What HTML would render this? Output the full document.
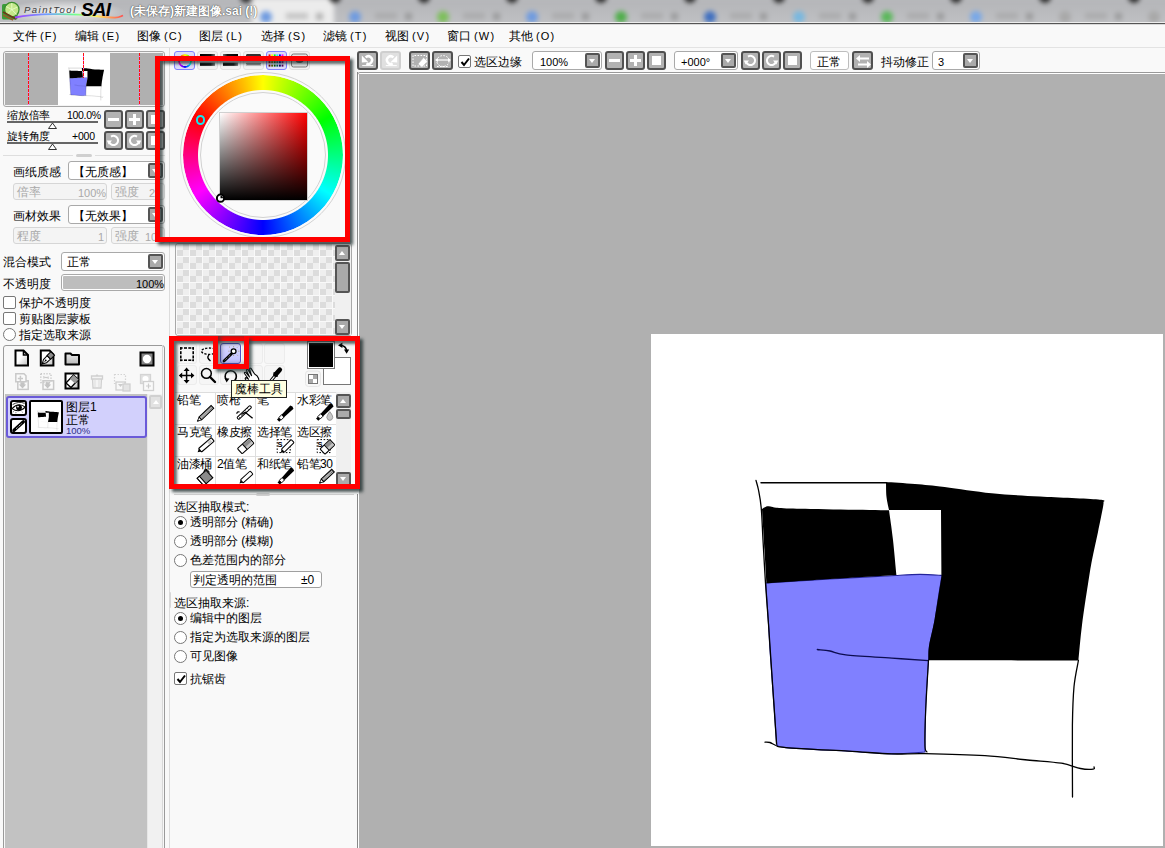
<!DOCTYPE html><html><head><meta charset="utf-8"><style>
*{box-sizing:border-box;margin:0;padding:0}
html,body{width:1165px;height:848px;overflow:hidden;background:#f9f9f9;font-family:"Liberation Sans",sans-serif;font-size:12px;color:#000}
body{position:relative}
.a{position:absolute}
.t{position:absolute;white-space:nowrap;line-height:14px;font-size:12px;font-weight:500}
.dbtn{position:absolute;border:2px solid #505050;border-radius:3px;background:#b2b2b2}
.combo{position:absolute;background:#fff;border:1px solid #a9a9a9;border-radius:3px}
.dd{position:absolute;width:15px;height:15px;border:2px solid #555;border-radius:2px;background:#aaa}
.dd:after{content:"";position:absolute;left:2px;top:4px;border-left:3.5px solid transparent;border-right:3.5px solid transparent;border-top:4px solid #fff}
.rb{position:absolute;width:13px;height:13px;border:1px solid #777;border-radius:50%;background:#fff}
.cb{position:absolute;width:13px;height:13px;border:1px solid #777;border-radius:2px;background:#fff}
.redbox{position:absolute;border:5px solid #f00;box-shadow:3px 3px 3px rgba(30,45,45,.8), inset 3px 3px 3px rgba(30,45,45,.7)}
.dis{position:absolute;border:1px solid #d6d6d6;border-radius:3px;background:#f4f4f4;color:#a9a9a9}
.tb{position:absolute;border:1px solid #e2e2e2;border-radius:3px;background:#f4f4f4}
svg{position:absolute;overflow:visible}
</style></head><body>
<div class="a" style="left:0;top:0;width:1165px;height:22px;background:#b9babd;overflow:hidden">
<div class="a" style="left:-10px;top:-10px;width:1185px;height:42px;filter:blur(2.5px)">
<div class="a" style="left:0;top:10px;width:1185px;height:32px;background:linear-gradient(#b4b5b8,#c4c5c8)"></div>
<div class="a" style="left:262px;top:8px;width:82px;height:30px;background:#ececec"></div>
<div class="a" style="left:250px;top:0px;width:12px;height:13px;border-radius:50%;background:#2a2a2a"></div>
<div class="a" style="left:338.7px;top:0px;width:12px;height:13px;border-radius:50%;background:#2a2a2a"></div>
<div class="a" style="left:427.5px;top:0px;width:12px;height:13px;border-radius:50%;background:#2a2a2a"></div>
<div class="a" style="left:516.3px;top:0px;width:12px;height:13px;border-radius:50%;background:#2a2a2a"></div>
<div class="a" style="left:605.1px;top:0px;width:12px;height:13px;border-radius:50%;background:#2a2a2a"></div>
<div class="a" style="left:693.9px;top:0px;width:12px;height:13px;border-radius:50%;background:#2a2a2a"></div>
<div class="a" style="left:782.7px;top:0px;width:12px;height:13px;border-radius:50%;background:#2a2a2a"></div>
<div class="a" style="left:871.5px;top:0px;width:12px;height:13px;border-radius:50%;background:#2a2a2a"></div>
<div class="a" style="left:960.3px;top:0px;width:12px;height:13px;border-radius:50%;background:#2a2a2a"></div>
<div class="a" style="left:1049.1px;top:0px;width:12px;height:13px;border-radius:50%;background:#2a2a2a"></div>
<div class="a" style="left:1137.9px;top:0px;width:12px;height:13px;border-radius:50%;background:#2a2a2a"></div>
<div class="a" style="left:1226.7px;top:0px;width:12px;height:13px;border-radius:50%;background:#2a2a2a"></div>
<div class="a" style="left:269.7px;top:21px;width:12px;height:12px;border-radius:50%;background:#6f9be0"></div>
<div class="a" style="left:295.7px;top:23px;width:22px;height:6px;background:#9a9a9a;opacity:.5"></div>
<div class="a" style="left:325.7px;top:23px;width:7px;height:7px;background:#777;opacity:.5"></div>
<div class="a" style="left:358.5px;top:21px;width:12px;height:12px;border-radius:50%;background:#6f9be0"></div>
<div class="a" style="left:384.5px;top:23px;width:22px;height:6px;background:#9a9a9a;opacity:.5"></div>
<div class="a" style="left:414.5px;top:23px;width:7px;height:7px;background:#777;opacity:.5"></div>
<div class="a" style="left:447.3px;top:21px;width:12px;height:12px;border-radius:50%;background:#7cbf5a"></div>
<div class="a" style="left:473.3px;top:23px;width:22px;height:6px;background:#9a9a9a;opacity:.5"></div>
<div class="a" style="left:503.3px;top:23px;width:7px;height:7px;background:#777;opacity:.5"></div>
<div class="a" style="left:536.1px;top:21px;width:12px;height:12px;border-radius:50%;background:#6f9be0"></div>
<div class="a" style="left:562.1px;top:23px;width:22px;height:6px;background:#9a9a9a;opacity:.5"></div>
<div class="a" style="left:592.1px;top:23px;width:7px;height:7px;background:#777;opacity:.5"></div>
<div class="a" style="left:624.9px;top:21px;width:12px;height:12px;border-radius:50%;background:#4fae4a"></div>
<div class="a" style="left:650.9px;top:23px;width:22px;height:6px;background:#9a9a9a;opacity:.5"></div>
<div class="a" style="left:680.9px;top:23px;width:7px;height:7px;background:#777;opacity:.5"></div>
<div class="a" style="left:713.7px;top:21px;width:12px;height:12px;border-radius:50%;background:#3f6fc0"></div>
<div class="a" style="left:739.7px;top:23px;width:22px;height:6px;background:#9a9a9a;opacity:.5"></div>
<div class="a" style="left:769.7px;top:23px;width:7px;height:7px;background:#777;opacity:.5"></div>
<div class="a" style="left:802.5px;top:21px;width:12px;height:12px;border-radius:50%;background:#78b8e0"></div>
<div class="a" style="left:828.5px;top:23px;width:22px;height:6px;background:#9a9a9a;opacity:.5"></div>
<div class="a" style="left:858.5px;top:23px;width:7px;height:7px;background:#777;opacity:.5"></div>
<div class="a" style="left:891.3px;top:21px;width:12px;height:12px;border-radius:50%;background:#5ab85a"></div>
<div class="a" style="left:917.3px;top:23px;width:22px;height:6px;background:#9a9a9a;opacity:.5"></div>
<div class="a" style="left:947.3px;top:23px;width:7px;height:7px;background:#777;opacity:.5"></div>
<div class="a" style="left:980.1px;top:21px;width:12px;height:12px;border-radius:50%;background:#78a8e8"></div>
<div class="a" style="left:1006.1px;top:23px;width:22px;height:6px;background:#9a9a9a;opacity:.5"></div>
<div class="a" style="left:1036.1px;top:23px;width:7px;height:7px;background:#777;opacity:.5"></div>
<div class="a" style="left:1068.9px;top:21px;width:12px;height:12px;border-radius:50%;background:#a8a8a8"></div>
<div class="a" style="left:1094.9px;top:23px;width:22px;height:6px;background:#9a9a9a;opacity:.5"></div>
<div class="a" style="left:1124.9px;top:23px;width:7px;height:7px;background:#777;opacity:.5"></div>
<div class="a" style="left:1157.7px;top:21px;width:12px;height:12px;border-radius:50%;background:#a8a8a8"></div>
<div class="a" style="left:1183.7px;top:23px;width:22px;height:6px;background:#9a9a9a;opacity:.5"></div>
<div class="a" style="left:1213.7px;top:23px;width:7px;height:7px;background:#777;opacity:.5"></div>
</div>
<div class="a" style="left:1px;top:0px;width:125px;height:22px;background:radial-gradient(ellipse at 50% 55%,rgba(255,255,255,.9),rgba(255,255,255,0) 70%)"></div>
<svg style="left:0;top:0" width="130" height="22" viewBox="0 0 130 22"><defs><linearGradient id="rbw"><stop offset="0" stop-color="#a040ff"/><stop offset=".3" stop-color="#70a0ff"/><stop offset=".55" stop-color="#70ff90"/><stop offset=".75" stop-color="#fff060"/><stop offset="1" stop-color="#ff5050"/></linearGradient></defs><rect x="2" y="4" width="15.5" height="15.5" rx="1.5" fill="#3a9c3a"/><circle cx="11.8" cy="9.6" r="7.2" fill="#c4e88a" stroke="#3d8f2f" stroke-width="1.3"/><path d="M11.8 9.6 L11.8 3 M11.8 9.6 L17.5 7 M11.8 9.6 L16.5 14.5 M11.8 9.6 L7 14.5 M11.8 9.6 L6 6.5" stroke="#eaffd0" stroke-width="0.8"/><path d="M3 12 L16 19" stroke="#6a3a18" stroke-width="1.8"/><path d="M3 15 L13 20" stroke="#9a5a28" stroke-width="1.4"/><path d="M15 17.5 C35 13.5, 70 13, 95 16 S 118 17.5, 123 15.5" stroke="url(#rbw)" stroke-width="1.8" fill="none"/></svg>
<div class="t" style="left:24px;top:5px;font-size:9.5px;line-height:9px;font-style:italic;font-weight:400;color:#3a3a3a;letter-spacing:1.5px">PaintTool</div>
<div class="t" style="left:81px;top:2px;font-size:19px;line-height:16px;font-weight:bold;font-style:italic;color:#000;letter-spacing:-0.8px">SAI</div>
<div class="t" style="left:130px;top:5px;font-size:12px;line-height:13px;color:#fff;font-weight:bold;text-shadow:0 0 1px rgba(0,0,0,.7),0 0 2px rgba(0,0,0,.35)">(未保存)新建图像.sai (!)</div>
</div>
<div class="a" style="left:0px;top:22px;width:1165px;height:1px;background:#ededed"></div>
<div class="a" style="left:0px;top:23px;width:1165px;height:1px;background:#555"></div>
<div class="a" style="left:0px;top:24px;width:1165px;height:1px;background:#d9d9d9"></div>
<div class="t" style="left:13px;top:29px;">文件<span style="font-size:11px;margin-left:3px;letter-spacing:1.2px">(F)</span></div>
<div class="t" style="left:75px;top:29px;">编辑<span style="font-size:11px;margin-left:3px;letter-spacing:1.2px">(E)</span></div>
<div class="t" style="left:137px;top:29px;">图像<span style="font-size:11px;margin-left:3px;letter-spacing:1.2px">(C)</span></div>
<div class="t" style="left:199px;top:29px;">图层<span style="font-size:11px;margin-left:3px;letter-spacing:1.2px">(L)</span></div>
<div class="t" style="left:261px;top:29px;">选择<span style="font-size:11px;margin-left:3px;letter-spacing:1.2px">(S)</span></div>
<div class="t" style="left:323px;top:29px;">滤镜<span style="font-size:11px;margin-left:3px;letter-spacing:1.2px">(T)</span></div>
<div class="t" style="left:385px;top:29px;">视图<span style="font-size:11px;margin-left:3px;letter-spacing:1.2px">(V)</span></div>
<div class="t" style="left:447px;top:29px;">窗口<span style="font-size:11px;margin-left:3px;letter-spacing:1.2px">(W)</span></div>
<div class="t" style="left:509px;top:29px;">其他<span style="font-size:11px;margin-left:3px;letter-spacing:1.2px">(O)</span></div>
<div class="a" style="left:0px;top:47px;width:1165px;height:1px;background:#e3e3e3"></div>
<div class="a" style="left:357px;top:72px;width:820px;height:800px;border:1px solid #999;border-radius:3px;background:#fff"></div>
<div class="a" style="left:359px;top:74px;width:806px;height:774px;background:#b0b0b0"></div>
<div class="a" style="left:651px;top:334px;width:512px;height:512px;background:#fff"></div>
<div class="a" style="left:3px;top:51px;width:162px;height:56px;border:1px solid #a6a6a6;border-radius:3px;background:#f4f4f4"></div>
<div class="a" style="left:5px;top:53px;width:158px;height:52px;background:#b0b0b0"></div>
<div class="a" style="left:58px;top:53px;width:52px;height:52px;background:#fff"></div>
<svg style="left:58px;top:53px" width="52" height="53"><g transform="scale(0.1016) translate(-651 -334)"><path d="M765.8 583 C776.5 582.3 808.3 580.2 830 579 C851.7 577.8 885.0 576.1 896 575.5 C900.0 575.3 912.3 574.4 920 574.4 C927.7 574.4 938.3 575.2 942 575.4 C941.3 579.5 939.2 592.2 938 600 C936.8 607.8 936.1 614.3 934.7 622 C933.3 629.7 930.5 639.7 929.5 646 C928.5 652.3 928.7 657.7 928.5 660 C928.1 666.7 926.5 688.3 926 700 C925.5 711.7 925.4 721.3 925.2 730 C925.0 738.7 925.0 748.3 925 752 C919.5 752.3 904.8 754.0 892 753.9 C879.2 753.8 866.2 752.2 848.5 751.2 C830.8 750.2 798.0 748.8 786 747.6 C774.0 746.4 778.2 744.6 776.6 744 C776.2 737.6 775.1 721.3 774 705.6 C772.9 689.9 770.9 663.6 770 650 C769.1 636.4 769.2 635.2 768.5 624 C767.8 612.8 766.2 589.8 765.8 583 Z" fill="#8080ff" stroke="#24249a" stroke-width="1.1"/><path d="M762 509 C762.7 508.6 764.7 507.2 766 506.8 C767.3 506.4 766.0 506.2 770 506.5 C774.0 506.8 770.2 507.9 790 508.5 C809.8 509.1 872.5 510.0 889 510.3 C889.7 515.2 891.8 529.2 893 540 C894.2 550.8 895.8 569.2 896.4 575 C885.3 575.7 851.7 577.6 830 579 C808.3 580.4 777.0 582.6 766.4 583.3 C766.1 577.8 765.2 562.4 764.5 550 C763.8 537.6 762.4 515.8 762 509 Z" fill="#000"/><path d="M886 482 C890.8 482.3 905.2 483.2 915 484 C924.8 484.8 931.8 485.4 944.6 487 C957.4 488.6 975.8 491.7 991.7 493.3 C1007.6 494.9 1022.2 495.5 1040 496.5 C1057.8 497.5 1087.6 498.6 1098.2 499.5 C1108.8 500.4 1102.6 501.6 1103.5 502 C1103.4 502.8 1103.9 502.0 1103 507 C1102.1 512.0 1099.8 523.2 1098 532 C1096.2 540.8 1093.7 551.3 1092 560 C1090.3 568.7 1089.7 573.2 1088 584 C1086.3 594.8 1083.6 612.2 1082 625 C1080.4 637.8 1079.0 654.6 1078.4 660.5 C1053.4 660.5 953.5 660.3 928.5 660.3 C928.6 657.9 928.0 652.9 929 646 C930.0 639.1 932.6 630.3 934.7 618.7 C936.8 607.1 940.4 583.5 941.5 576.5 C941.4 565.4 941.1 521.1 941 510 C932.3 510.0 897.7 510.0 889 510 C888.6 507.8 887.0 501.7 886.5 497 C886.0 492.3 886.1 484.5 886 482 Z" fill="#000"/><path d="M756 480.4 C756.4 482.0 757.6 485.4 758.5 490 C759.4 494.6 760.5 499.5 761.2 507.8 C762.0 516.1 762.3 527.5 763 540 C763.7 552.5 764.6 569.0 765.5 583 C766.4 597.0 767.1 603.6 768.5 624 C769.9 644.4 772.6 685.6 774 705.6 C775.4 725.6 776.2 737.6 776.6 744 " fill="none" stroke="#000" stroke-width="1.3" stroke-linecap="round"/><path d="M761 482.7 C781.9 482.7 865.5 482.7 886.4 482.7 " fill="none" stroke="#000" stroke-width="1.5" stroke-linecap="round"/><path d="M817.3 649.5 C819.4 649.8 825.2 650.1 830 651 C834.8 651.9 835.5 653.7 845.8 654.9 C856.1 656.1 878.1 657.1 891.9 658.1 C905.7 659.1 922.4 660.2 928.5 660.6 " fill="none" stroke="#0c0c50" stroke-width="1.3" stroke-linecap="round"/><path d="M765 742.2 C765.8 742.2 768.2 742.0 770 742.5 C771.8 743.0 773.3 744.6 776 745.5 C778.7 746.4 773.9 746.6 786 747.6 C798.1 748.6 830.9 750.2 848.5 751.2 C866.1 752.2 879.1 753.5 891.9 753.9 C904.6 754.3 909.5 753.3 925 753.6 C940.5 753.9 967.9 754.6 985 755.7 C1002.1 756.8 1014.7 758.8 1027.4 760 C1040.1 761.2 1052.6 761.8 1061.4 763.2 C1070.2 764.6 1075.2 767.5 1080.5 768.5 C1085.8 769.5 1091.0 769.4 1093.2 769.1 C1095.5 768.9 1093.9 767.4 1094 767 " fill="none" stroke="#000" stroke-width="1.3" stroke-linecap="round"/><path d="M1078.4 660.5 C1077.7 664.9 1075.0 676.0 1074 686.7 C1073.0 697.5 1072.7 706.6 1072.4 725 C1072.2 743.4 1072.5 785.0 1072.5 797 " fill="none" stroke="#000" stroke-width="1.3" stroke-linecap="round"/><path d="M928.5 660 C928.0 669.0 926.1 700.0 925.5 714.3 C924.9 728.6 924.8 739.7 925 746 C925.2 752.3 926.7 751.0 927 752 " fill="none" stroke="#000" stroke-width="1.2" stroke-linecap="round"/></g></svg>
<div class="a" style="left:28px;top:53px;width:1px;height:52px;background:repeating-linear-gradient(180deg,#ff1010 0 3px,#ff70ff 3px 4px)"></div>
<div class="a" style="left:83px;top:53px;width:1px;height:25px;background:repeating-linear-gradient(180deg,#ff1010 0 3px,#ff70ff 3px 4px)"></div>
<div class="a" style="left:139px;top:53px;width:1px;height:52px;background:repeating-linear-gradient(180deg,#ff1010 0 3px,#ff70ff 3px 4px)"></div>
<div class="t" style="left:7px;top:109px;font-size:10.5px;line-height:12px;color:#000;letter-spacing:-0.2px">缩放倍率</div>
<div class="t" style="left:67px;top:110px;font-size:10.5px;line-height:11px;letter-spacing:-0.3px">100.0%</div>
<div class="a" style="left:7px;top:121px;width:91px;height:2px;background:#666"></div>
<svg style="left:47px;top:122px" width="12" height="8"><path d="M1.5 6.5 L5.5 1 L9.5 6.5 Z" fill="#fff" stroke="#333" stroke-width="1"/></svg>
<div class="t" style="left:7px;top:130px;font-size:10.5px;line-height:12px;letter-spacing:-0.2px">旋转角度</div>
<div class="t" style="left:72px;top:131px;font-size:10.5px;line-height:11px;letter-spacing:-0.2px">+000</div>
<div class="a" style="left:7px;top:142px;width:91px;height:2px;background:#666"></div>
<svg style="left:47px;top:143px" width="12" height="8"><path d="M1.5 6.5 L5.5 1 L9.5 6.5 Z" fill="#fff" stroke="#333" stroke-width="1"/></svg>
<div class="dbtn" style="left:104px;top:110px;width:19px;height:19px"><div class="a" style="left:2px;top:6px;width:11px;height:3px;background:#fff"></div></div>
<div class="dbtn" style="left:125px;top:110px;width:19px;height:19px"><div class="a" style="left:2px;top:6px;width:11px;height:3px;background:#fff"></div><div class="a" style="left:6px;top:2px;width:3px;height:11px;background:#fff"></div></div>
<div class="dbtn" style="left:146px;top:110px;width:19px;height:19px"><div class="a" style="left:3px;top:3px;width:9px;height:9px;background:#fff"></div></div>
<div class="dbtn" style="left:104px;top:131px;width:19px;height:19px"><svg style="left:0px;top:0px" width="15" height="15"><path d="M5 3.6 A4.6 4.6 0 1 1 3.2 9.2" stroke="#fff" stroke-width="2" fill="none"/><path d="M0.8 7.6 L6 7.6 L2.6 11.6 Z" fill="#fff"/></svg></div>
<div class="dbtn" style="left:125px;top:131px;width:19px;height:19px"><svg style="left:0px;top:0px" width="15" height="15"><path d="M10 3.6 A4.6 4.6 0 1 0 11.8 9.2" stroke="#fff" stroke-width="2" fill="none"/><path d="M14.2 7.6 L9 7.6 L12.4 11.6 Z" fill="#fff"/></svg></div>
<div class="dbtn" style="left:146px;top:131px;width:19px;height:19px"><div class="a" style="left:3px;top:3px;width:9px;height:9px;background:#fff"></div></div>
<div class="a" style="left:3px;top:155px;width:70px;height:1px;background:#dedede"></div>
<div class="a" style="left:76px;top:154px;width:16px;height:3px;background:#d0d0d0;border-radius:2px"></div>
<div class="a" style="left:95px;top:155px;width:70px;height:1px;background:#dedede"></div>
<div class="t" style="left:13px;top:165px;">画纸质感</div>
<div class="combo" style="left:68px;top:161px;width:97px;height:19px;"></div>
<div class="t" style="left:73px;top:165px;">【无质感】</div>
<div class="dd" style="left:148px;top:163px"></div>
<div class="dis" style="left:13px;top:183px;width:94px;height:17px"><div class="t" style="left:3px;top:1px">倍率</div><div class="t" style="left:64px;top:2px;font-size:11px">100%</div></div>
<div class="dis" style="left:111px;top:183px;width:54px;height:17px"><div class="t" style="left:3px;top:1px">强度</div><div class="t" style="left:37px;top:2px;font-size:11px">2</div></div>
<div class="t" style="left:13px;top:209px;">画材效果</div>
<div class="combo" style="left:68px;top:205px;width:97px;height:19px;"></div>
<div class="t" style="left:73px;top:209px;">【无效果】</div>
<div class="dd" style="left:148px;top:207px"></div>
<div class="dis" style="left:13px;top:227px;width:94px;height:17px"><div class="t" style="left:3px;top:1px">程度</div><div class="t" style="left:84px;top:2px;font-size:11px">1</div></div>
<div class="dis" style="left:111px;top:227px;width:54px;height:17px"><div class="t" style="left:3px;top:1px">强度</div><div class="t" style="left:33px;top:2px;font-size:11px">10</div></div>
<div class="t" style="left:3px;top:255px;">混合模式</div>
<div class="combo" style="left:61px;top:252px;width:104px;height:19px;"></div>
<div class="t" style="left:67px;top:255px;">正常</div>
<div class="dd" style="left:148px;top:254px"></div>
<div class="t" style="left:3px;top:277px;">不透明度</div>
<div class="a" style="left:61px;top:274px;width:104px;height:17px;border:1px solid #a9a9a9;border-radius:3px;background:#fff;padding:1px"><div style="width:100%;height:100%;background:#bdbdbd;border-radius:1px"></div></div>
<div class="t" style="left:136px;top:277px;font-size:11px">100%</div>
<div class="cb" style="left:3px;top:296px;width:13px;height:13px;"></div>
<div class="t" style="left:19px;top:296px;">保护不透明度</div>
<div class="cb" style="left:3px;top:312px;width:13px;height:13px;"></div>
<div class="t" style="left:19px;top:312px;">剪贴图层蒙板</div>
<div class="rb" style="left:3px;top:328px;width:13px;height:13px;"></div>
<div class="t" style="left:19px;top:328px;">指定选取来源</div>
<div class="a" style="left:3px;top:345px;width:162px;height:520px;border:1px solid #9a9a9a;border-radius:3px;background:#f8f8f8"></div>
<svg style="left:14px;top:349px" width="17" height="19" viewBox="0 0 17 19"><defs><linearGradient id="pg" x1="0" y1="0" x2="1" y2="1"><stop offset=".45" stop-color="#fff"/><stop offset="1" stop-color="#bbb"/></linearGradient></defs><path d="M1.5 1.5 H9.5 L14 6 V16.5 H1.5 Z" fill="url(#pg)" stroke="#000" stroke-width="2" stroke-linejoin="miter"/><path d="M9.5 1.5 V6 H14" fill="none" stroke="#000" stroke-width="1.6"/></svg>
<svg style="left:0;top:0" width="1165" height="848" viewBox="0 0 1165 848"><path d="M40.8 350.6 H49.6 L53.4 354.4 V365.4 H40.8 Z" fill="url(#pg)" stroke="#000" stroke-width="2"/><g transform="translate(42.2 364) rotate(-45)"><path d="M0 0 L4 -2.2 L9.4 -2.4 L9.4 2.4 L4 2.2 Z" fill="#fff" stroke="#000" stroke-width="1"/><circle cx="5" cy="0" r="0.9" fill="#000"/><path d="M0.6 0 H4.2" stroke="#000" stroke-width="0.6"/><rect x="9.4" y="-2.6" width="5.4" height="5.2" fill="#8a8a8a" stroke="#000" stroke-width="1"/></g></svg>
<svg style="left:64px;top:351px" width="17" height="16" viewBox="0 0 17 16"><defs><linearGradient id="fg" x1="0" y1="0" x2="0" y2="1"><stop offset="0" stop-color="#e8e8e8"/><stop offset="1" stop-color="#b8b8b8"/></linearGradient></defs><path d="M1.5 2.5 H6.5 L8 4 H15 V13.5 H1.5 Z" fill="url(#fg)" stroke="#000" stroke-width="2" stroke-linejoin="round"/></svg>
<svg style="left:139px;top:351px" width="17" height="17" viewBox="0 0 17 17"><rect x="1.5" y="1.5" width="13" height="13" fill="#858585" stroke="#000" stroke-width="2"/><circle cx="8" cy="8" r="4.2" fill="#fff"/></svg>
<svg style="left:0;top:0" width="1165" height="848" viewBox="0 0 1165 848"><g fill="none" stroke="#c9c9c9" stroke-width="1.5"><rect x="17.8" y="380.8" width="10.4" height="8.6" fill="#fafafa"/><path d="M15.8 373.8 H24 L26 375.8 V381.8 H15.8 Z" fill="#fafafa"/><path d="M20.4 375.8 V381 M17.8 378.4 H23"/><rect x="43" y="380.8" width="10.6" height="8.6" fill="#fafafa"/><path d="M40.8 373.8 H51 V382" stroke-dasharray="1.2 1.6"/><path d="M40.8 373.8 V382.4 H51" stroke-dasharray="1.2 1.6"/><path d="M43 378 L49 377 M43 376.6 L49 378.4" stroke-width="0.9"/></g><path d="M20.4 382.2 H24.6 V384.6 H26.2 L22.5 388.4 L18.8 384.6 H20.4 Z" fill="#c4c4c4"/><path d="M45.6 382.2 H49.6 V384.6 H51.2 L47.6 388.4 L44 384.6 H45.6 Z" fill="#c4c4c4"/></svg>
<svg style="left:64px;top:372px" width="17" height="19" viewBox="0 0 17 19"><rect x="1.5" y="1.5" width="13" height="15" fill="url(#pg)" stroke="#000" stroke-width="2"/><path d="M2 11 L9.5 3 L14.5 7.5 L7 15.5 Z" fill="#fff" stroke="#000" stroke-width="1.3"/><path d="M6 7 L9.5 3 L14.5 7.5 L11 11.5 Z" fill="#999"/></svg>
<svg style="left:89px;top:372px" width="17" height="18" viewBox="0 0 17 18"><path d="M2.5 4 H13.5 V7 H2.5 Z M3.5 7 H12.5 L12 16 H4 Z" fill="#f4f4f4" stroke="#d0d0d0" stroke-width="1.3"/><path d="M6 8 V15 M10 8 V15" stroke="#ddd" stroke-width="1"/><path d="M7 4 Q8 1 9 4" fill="none" stroke="#d0d0d0"/></svg>
<svg style="left:113px;top:373px" width="19" height="19" viewBox="0 0 19 19"><rect x="1.5" y="1.5" width="11" height="9" fill="none" stroke="#d4d4d4" stroke-width="1.2" stroke-dasharray="1.5 1.5"/><rect x="3" y="9" width="9" height="8" fill="#f8f8f8" stroke="#d0d0d0" stroke-width="1.3"/><rect x="10" y="11" width="7" height="7" fill="#e4e4e4" stroke="#d0d0d0" stroke-width="1.3"/><path d="M5 11 H10 L7.5 14 Z" fill="#ccc"/></svg>
<svg style="left:139px;top:373px" width="17" height="19" viewBox="0 0 17 19"><rect x="1.5" y="1.5" width="10" height="9" fill="#e2e2e2" stroke="#d4d4d4" stroke-width="1.3"/><circle cx="6.5" cy="6" r="3" fill="#fff"/><rect x="4.5" y="8.5" width="10" height="9" fill="#fafafa" stroke="#d0d0d0" stroke-width="1.3"/><path d="M9.5 10.5 V15.5 M7 13 H12" stroke="#ccc" stroke-width="1.2"/></svg>
<div class="a" style="left:5px;top:394px;width:142px;height:460px;background:#c2c2c2"></div>
<div class="a" style="left:147px;top:394px;width:16px;height:460px;background:#f1f1f1;border-left:1px solid #e6e6e6"></div>
<div class="a" style="left:162px;top:345px;width:1px;height:503px;background:#d8d8d8"></div>
<div class="a" style="left:169px;top:48px;width:1px;height:800px;background:#dcdcdc"></div>
<div class="a" style="left:149px;top:395px;width:13px;height:14px;border:2px solid #d0d0d0;border-radius:2px;background:#e2e2e2"><div class="a" style="left:1.5px;top:3px;border-left:3.5px solid transparent;border-right:3.5px solid transparent;border-bottom:4px solid #fff"></div></div>
<div class="a" style="left:6px;top:396px;width:141px;height:42px;border:2px solid #6a5ad8;border-radius:3px;background:#d2d0fc"></div>
<div class="a" style="left:10px;top:400px;width:17px;height:16px;border:2px solid #000;border-radius:3px;background:#fff"></div>
<svg style="left:0;top:0" width="1165" height="848" viewBox="0 0 1165 848"><path d="M12 408.6 Q18.5 401.6 25.2 407.2 Q19 413.6 12 408.6 Z" fill="#fff" stroke="#000" stroke-width="1.1"/><circle cx="19" cy="407.6" r="2.9" fill="#000"/><circle cx="18" cy="406.6" r="0.9" fill="#fff"/><path d="M12.6 404.6 Q19 400.8 24.6 403.4" fill="none" stroke="#222" stroke-width="0.9"/><path d="M13.6 411 L13 412.4 M16 412 L15.8 413.2 M22 411.6 L22.6 412.6" stroke="#555" stroke-width="0.7"/></svg>
<div class="a" style="left:10px;top:418px;width:17px;height:16px;border:2px solid #000;border-radius:3px;background:#fff"></div>
<svg style="left:0;top:0" width="1165" height="848" viewBox="0 0 1165 848"><path d="M14 430.2 L23.4 421.8" stroke="#000" stroke-width="3.2" stroke-linecap="round"/><path d="M12.6 431.6 L14.4 430" stroke="#000" stroke-width="1.6"/><path d="M16 428.8 L21.6 423.6" stroke="#fff" stroke-width="0.9" stroke-dasharray="1.1 1"/></svg>
<div class="a" style="left:29px;top:400px;width:34px;height:34px;border:2px solid #000;border-radius:2px;background:#fff;overflow:hidden"></div>
<svg style="left:31px;top:402px" width="30" height="30"><g transform="scale(0.0615) translate(-651 -334)"><path d="M765.8 583 C776.5 582.3 808.3 580.2 830 579 C851.7 577.8 885.0 576.1 896 575.5 C900.0 575.3 912.3 574.4 920 574.4 C927.7 574.4 938.3 575.2 942 575.4 C941.3 579.5 939.2 592.2 938 600 C936.8 607.8 936.1 614.3 934.7 622 C933.3 629.7 930.5 639.7 929.5 646 C928.5 652.3 928.7 657.7 928.5 660 C928.1 666.7 926.5 688.3 926 700 C925.5 711.7 925.4 721.3 925.2 730 C925.0 738.7 925.0 748.3 925 752 C919.5 752.3 904.8 754.0 892 753.9 C879.2 753.8 866.2 752.2 848.5 751.2 C830.8 750.2 798.0 748.8 786 747.6 C774.0 746.4 778.2 744.6 776.6 744 C776.2 737.6 775.1 721.3 774 705.6 C772.9 689.9 770.9 663.6 770 650 C769.1 636.4 769.2 635.2 768.5 624 C767.8 612.8 766.2 589.8 765.8 583 Z" fill="#fff" stroke="#bbb" stroke-width="1.1"/><path d="M762 509 C762.7 508.6 764.7 507.2 766 506.8 C767.3 506.4 766.0 506.2 770 506.5 C774.0 506.8 770.2 507.9 790 508.5 C809.8 509.1 872.5 510.0 889 510.3 C889.7 515.2 891.8 529.2 893 540 C894.2 550.8 895.8 569.2 896.4 575 C885.3 575.7 851.7 577.6 830 579 C808.3 580.4 777.0 582.6 766.4 583.3 C766.1 577.8 765.2 562.4 764.5 550 C763.8 537.6 762.4 515.8 762 509 Z" fill="#000"/><path d="M886 482 C890.8 482.3 905.2 483.2 915 484 C924.8 484.8 931.8 485.4 944.6 487 C957.4 488.6 975.8 491.7 991.7 493.3 C1007.6 494.9 1022.2 495.5 1040 496.5 C1057.8 497.5 1087.6 498.6 1098.2 499.5 C1108.8 500.4 1102.6 501.6 1103.5 502 C1103.4 502.8 1103.9 502.0 1103 507 C1102.1 512.0 1099.8 523.2 1098 532 C1096.2 540.8 1093.7 551.3 1092 560 C1090.3 568.7 1089.7 573.2 1088 584 C1086.3 594.8 1083.6 612.2 1082 625 C1080.4 637.8 1079.0 654.6 1078.4 660.5 C1053.4 660.5 953.5 660.3 928.5 660.3 C928.6 657.9 928.0 652.9 929 646 C930.0 639.1 932.6 630.3 934.7 618.7 C936.8 607.1 940.4 583.5 941.5 576.5 C941.4 565.4 941.1 521.1 941 510 C932.3 510.0 897.7 510.0 889 510 C888.6 507.8 887.0 501.7 886.5 497 C886.0 492.3 886.1 484.5 886 482 Z" fill="#000"/><path d="M756 480.4 C756.4 482.0 757.6 485.4 758.5 490 C759.4 494.6 760.5 499.5 761.2 507.8 C762.0 516.1 762.3 527.5 763 540 C763.7 552.5 764.6 569.0 765.5 583 C766.4 597.0 767.1 603.6 768.5 624 C769.9 644.4 772.6 685.6 774 705.6 C775.4 725.6 776.2 737.6 776.6 744 " fill="none" stroke="#000" stroke-width="1.3" stroke-linecap="round"/><path d="M761 482.7 C781.9 482.7 865.5 482.7 886.4 482.7 " fill="none" stroke="#000" stroke-width="1.5" stroke-linecap="round"/><path d="M817.3 649.5 C819.4 649.8 825.2 650.1 830 651 C834.8 651.9 835.5 653.7 845.8 654.9 C856.1 656.1 878.1 657.1 891.9 658.1 C905.7 659.1 922.4 660.2 928.5 660.6 " fill="none" stroke="#bbb" stroke-width="1.3" stroke-linecap="round"/><path d="M765 742.2 C765.8 742.2 768.2 742.0 770 742.5 C771.8 743.0 773.3 744.6 776 745.5 C778.7 746.4 773.9 746.6 786 747.6 C798.1 748.6 830.9 750.2 848.5 751.2 C866.1 752.2 879.1 753.5 891.9 753.9 C904.6 754.3 909.5 753.3 925 753.6 C940.5 753.9 967.9 754.6 985 755.7 C1002.1 756.8 1014.7 758.8 1027.4 760 C1040.1 761.2 1052.6 761.8 1061.4 763.2 C1070.2 764.6 1075.2 767.5 1080.5 768.5 C1085.8 769.5 1091.0 769.4 1093.2 769.1 C1095.5 768.9 1093.9 767.4 1094 767 " fill="none" stroke="#000" stroke-width="1.3" stroke-linecap="round"/><path d="M1078.4 660.5 C1077.7 664.9 1075.0 676.0 1074 686.7 C1073.0 697.5 1072.7 706.6 1072.4 725 C1072.2 743.4 1072.5 785.0 1072.5 797 " fill="none" stroke="#000" stroke-width="1.3" stroke-linecap="round"/><path d="M928.5 660 C928.0 669.0 926.1 700.0 925.5 714.3 C924.9 728.6 924.8 739.7 925 746 C925.2 752.3 926.7 751.0 927 752 " fill="none" stroke="#000" stroke-width="1.2" stroke-linecap="round"/></g></svg>
<div class="t" style="left:66px;top:400px;">图层1</div>
<div class="t" style="left:66px;top:413px;">正常</div>
<div class="t" style="left:66px;top:426px;font-size:9.5px;line-height:10px;color:#303088;font-weight:400">100%</div>
<div class="a" style="left:357px;top:48px;width:1px;height:24px;background:#f9f9f9"></div>
<div class="a" style="left:357px;top:72px;width:1px;height:776px;background:#888"></div>
<div class="a" style="left:174px;top:51px;width:21px;height:19px;border-radius:3px;border:1px solid #8080ff;background:#dcdcf8"><div class="a" style="left:2.5px;top:2.4px;width:14px;height:14px;border-radius:50%;background:conic-gradient(#ff0,#0f0 16.67%,#0ff 33.33%,#00f 50%,#f0f 66.67%,#f00 83.33%,#ff0);-webkit-mask:radial-gradient(circle,transparent 4.8px,#000 5.3px)"></div></div>
<div class="a" style="left:197px;top:51px;width:21px;height:19px;border-radius:3px;border:1px solid #e0e0e0;background:#f2f2f2"></div>
<div class="a" style="left:220px;top:51px;width:21px;height:19px;border-radius:3px;border:1px solid #e0e0e0;background:#f2f2f2"></div>
<div class="a" style="left:243px;top:51px;width:21px;height:19px;border-radius:3px;border:1px solid #e0e0e0;background:#f2f2f2"></div>
<div class="a" style="left:266px;top:51px;width:21px;height:19px;border-radius:3px;border:1px solid #8080ff;background:#dcdcf8"></div>
<div class="a" style="left:289px;top:51px;width:21px;height:19px;border-radius:3px;border:1px solid #e0e0e0;background:#f2f2f2"></div>
<svg style="left:0;top:0" width="1165" height="848" viewBox="0 0 1165 848"><defs><linearGradient id="cw" x1="0" y1="0" x2="1" y2="1"><stop offset="0" stop-color="#ff0"/><stop offset=".35" stop-color="#0f0"/><stop offset=".6" stop-color="#0ff"/><stop offset=".8" stop-color="#00f"/><stop offset="1" stop-color="#f0f"/></linearGradient></defs><defs><linearGradient id="bar" x1="0" x2="1"><stop offset="0" stop-color="#000"/><stop offset=".7" stop-color="#111"/><stop offset="1" stop-color="#777"/></linearGradient><linearGradient id="bar2" x1="0" x2="1"><stop offset="0" stop-color="#777"/><stop offset=".3" stop-color="#111"/><stop offset="1" stop-color="#000"/></linearGradient></defs><rect x="200" y="54" width="15" height="3.2" fill="url(#bar)"/><rect x="200" y="62.6" width="15" height="3.2" fill="url(#bar)"/><rect x="223" y="54" width="15" height="3.2" fill="url(#bar2)"/><rect x="223" y="62.6" width="15" height="3.2" fill="url(#bar)"/><rect x="246" y="54" width="15" height="2.6" fill="#333"/><rect x="246" y="58.4" width="15" height="2.6" fill="url(#bar)"/><rect x="246" y="62.8" width="15" height="2.6" fill="#888"/><path d="M246 54 V65.4 M261 54 V65.4" stroke="#fff" stroke-width="0.8" stroke-dasharray="1 1"/><rect x="268.6" y="54.4" width="1.8" height="2" fill="#f00"/><rect x="271.2" y="54.4" width="1.8" height="2" fill="#ff0"/><rect x="273.8" y="54.4" width="1.8" height="2" fill="#0f0"/><rect x="276.4" y="54.4" width="1.8" height="2" fill="#0ff"/><rect x="279.0" y="54.4" width="1.8" height="2" fill="#00f"/><rect x="281.6" y="54.4" width="1.8" height="2" fill="#f0f"/><rect x="268.6" y="57.8" width="1.8" height="2" fill="#c00"/><rect x="271.2" y="57.8" width="1.8" height="2" fill="#aa0"/><rect x="273.8" y="57.8" width="1.8" height="2" fill="#0a0"/><rect x="276.4" y="57.8" width="1.8" height="2" fill="#0aa"/><rect x="279.0" y="57.8" width="1.8" height="2" fill="#00c"/><rect x="281.6" y="57.8" width="1.8" height="2" fill="#a0a"/><rect x="268.6" y="61.2" width="1.8" height="2" fill="#800"/><rect x="271.2" y="61.2" width="1.8" height="2" fill="#660"/><rect x="273.8" y="61.2" width="1.8" height="2" fill="#060"/><rect x="276.4" y="61.2" width="1.8" height="2" fill="#066"/><rect x="279.0" y="61.2" width="1.8" height="2" fill="#008"/><rect x="281.6" y="61.2" width="1.8" height="2" fill="#606"/><rect x="268.6" y="64.6" width="1.8" height="2" fill="#600"/><rect x="271.2" y="64.6" width="1.8" height="2" fill="#550"/><rect x="273.8" y="64.6" width="1.8" height="2" fill="#050"/><rect x="276.4" y="64.6" width="1.8" height="2" fill="#055"/><rect x="279.0" y="64.6" width="1.8" height="2" fill="#006"/><rect x="281.6" y="64.6" width="1.8" height="2" fill="#505"/><rect x="291.5" y="54" width="16" height="13" rx="2" fill="#e6e6e6" stroke="#7a7a7a" stroke-width="1"/><ellipse cx="299.5" cy="60" rx="4" ry="3" fill="#555"/></svg>
<div class="a" style="left:180px;top:72px;width:166px;height:166px;border-radius:50%;border:1px solid #d2d2d2;background:#fafafa"></div>
<div class="a" style="left:183px;top:75px;width:160px;height:160px;border-radius:50%;background:conic-gradient(#ff0,#0f0 16.67%,#0ff 33.33%,#00f 50%,#f0f 66.67%,#f00 83.33%,#ff0);-webkit-mask:radial-gradient(circle,transparent 64.5px,#000 65.5px)"></div>
<div class="a" style="left:200px;top:92px;width:126px;height:126px;border-radius:50%;border:1px solid #d2d2d2"></div>
<div class="a" style="left:219px;top:112px;width:89px;height:89px;background:#fafafa;border:1px solid #d0d0d0"></div>
<div class="a" style="left:220px;top:113px;width:87px;height:87px;background:linear-gradient(to top,#000,rgba(0,0,0,0)),linear-gradient(to right,#fff,#f00)"></div>
<div class="a" style="left:195.6px;top:115px;width:9.6px;height:9.6px;border-radius:50%;border:2px solid #10e8f0"></div>
<svg style="left:214px;top:192px" width="13" height="13"><circle cx="6.5" cy="6.2" r="3.6" fill="#fff" stroke="#000" stroke-width="2"/><path d="M6.5 6.2 L9 6.2 A2.5 2.5 0 0 0 6.5 3.7 Z" fill="#000"/></svg>
<div class="a" style="left:175px;top:243px;width:177px;height:93px;border:1px solid #a8a8a8;border-radius:3px;background:#fafafa"></div>
<div class="a" style="left:177px;top:244px;width:158px;height:91px;background-image:linear-gradient(to right,transparent 12px,#f9f9f9 12px),linear-gradient(to bottom,transparent 12px,#f9f9f9 12px),conic-gradient(from 0deg at 6px 6px,#dcdcdc 0 25%,#efefef 0 50%,#dcdcdc 0 75%,#efefef 0);background-size:13px 13px"></div>
<div class="a" style="left:335px;top:244px;width:16px;height:91px;background:#f0f0f0"></div>
<div class="a" style="left:335px;top:245px;width:15px;height:16px;border:2px solid #555;border-radius:2px;background:#aaa"><div class="a" style="left:2.0px;top:4.0px;border-left:3.5px solid transparent;border-right:3.5px solid transparent;border-bottom:4px solid #fff"></div></div>
<div class="a" style="left:335px;top:262px;width:15px;height:31px;border:2px solid #555;border-radius:2px;background:#aaa"></div>
<div class="a" style="left:335px;top:319px;width:15px;height:16px;border:2px solid #555;border-radius:2px;background:#aaa"><div class="a" style="left:2.0px;top:4.0px;border-left:3.5px solid transparent;border-right:3.5px solid transparent;border-top:4px solid #fff"></div></div>
<div class="a" style="left:174px;top:341px;width:181px;height:50px;background:#f9f9f9"></div>
<div class="a" style="left:177px;top:343px;width:20px;height:21px;border-radius:3px;border:1px solid #ececec;background:#f6f6f6"></div>
<div class="a" style="left:199px;top:343px;width:20px;height:21px;border-radius:3px;border:1px solid #ececec;background:#f6f6f6"></div>
<div class="a" style="left:220px;top:343px;width:21px;height:21px;border-radius:3px;border:1px solid #5050c8;background:linear-gradient(#d8d8ff,#c0c0ff)"></div>
<div class="a" style="left:242px;top:343px;width:21px;height:21px;border-radius:3px;border:1px solid #ececec;background:#f6f6f6"></div>
<div class="a" style="left:264px;top:343px;width:21px;height:21px;border-radius:3px;border:1px solid #ececec;background:#f6f6f6"></div>
<div class="a" style="left:177px;top:365px;width:20px;height:20px;border-radius:3px;border:1px solid #ececec;background:#f6f6f6"></div>
<div class="a" style="left:199px;top:365px;width:20px;height:20px;border-radius:3px;border:1px solid #ececec;background:#f6f6f6"></div>
<div class="a" style="left:220px;top:365px;width:21px;height:20px;border-radius:3px;border:1px solid #ececec;background:#f6f6f6"></div>
<div class="a" style="left:242px;top:365px;width:21px;height:20px;border-radius:3px;border:1px solid #ececec;background:#f6f6f6"></div>
<div class="a" style="left:264px;top:365px;width:21px;height:20px;border-radius:3px;border:1px solid #ececec;background:#f6f6f6"></div>
<svg style="left:0;top:0" width="1165" height="848" viewBox="0 0 1165 848"><rect x="180" y="347.2" width="2.6" height="1.6"/><rect x="180" y="359.4" width="2.6" height="1.6"/><rect x="180" y="347.2" width="1.6" height="2.6"/><rect x="192.4" y="347.2" width="1.6" height="2.6"/><rect x="184" y="347.2" width="3.0" height="1.6"/><rect x="184" y="359.4" width="3.0" height="1.6"/><rect x="180" y="351.2" width="1.6" height="3.0"/><rect x="192.4" y="351.2" width="1.6" height="3.0"/><rect x="188.3" y="347.2" width="3.0" height="1.6"/><rect x="188.3" y="359.4" width="3.0" height="1.6"/><rect x="180" y="355.5" width="1.6" height="3.0"/><rect x="192.4" y="355.5" width="1.6" height="3.0"/><rect x="192.4" y="347.2" width="1.6" height="1.6"/><rect x="192.4" y="359.4" width="1.6" height="1.6"/><rect x="180" y="359.6" width="1.6" height="1.6"/><rect x="192.4" y="359.6" width="1.6" height="1.6"/><ellipse cx="209" cy="351.2" rx="7.5" ry="3.2" fill="none" stroke="#000" stroke-width="1.4" stroke-dasharray="2.2 1.5"/><path d="M209 355 Q206 357.5 210.5 361" fill="none" stroke="#000" stroke-width="1.4"/><path d="M224 361 L231.5 353.8" stroke="#000" stroke-width="2.8" stroke-linecap="round"/><path d="M224.8 360.2 L230.8 354.6" stroke="#fff" stroke-width="0.7" stroke-dasharray="1 1"/><circle cx="233.6" cy="351.2" r="2.4" fill="#fff" stroke="#000" stroke-width="1.3"/><path d="M233.6 346.2 V347.4 M238.2 351.2 H239.4 M237 347.6 L237.8 346.8 M237 354.8 L237.8 355.6 M230 347.6 L229.2 346.8 M228.4 351.2 H229.4 M233.6 355 V356" stroke="#a89870" stroke-width="0.9"/><path d="M186.6 369 V382 M180 375.5 H193.2" stroke="#000" stroke-width="1.5"/><path d="M186.6 367.6 L183.6 371 H189.6 Z M186.6 383.6 L183.6 380 H189.6 Z M178.8 375.5 L182.2 372.5 V378.5 Z M194.4 375.5 L191 372.5 V378.5 Z" fill="#000"/><circle cx="206.4" cy="373.4" r="4.9" fill="none" stroke="#000" stroke-width="1.5"/><path d="M210 377 L215 382" stroke="#000" stroke-width="2.4" stroke-linecap="round"/><path d="M227 380.5 A5.6 5.6 0 1 1 234.8 380.2" fill="none" stroke="#000" stroke-width="1.6"/><path d="M224.6 378.2 L229.4 378.6 L226.6 382.6 Z" fill="#000"/><path d="M249 384 L245.6 379.5 Q244.6 378 246 377.6 L248.6 379.2 L244.5 373.5 Q244 372 245.6 372.2 L249.5 377 L246.4 370.5 Q246.4 369 248 369.6 L251.6 375.6 L249.4 369 Q249.6 367.6 251 368.4 L254.6 374 Q257.6 375.4 258.6 378.5 L259.5 384 Z" fill="#fff" stroke="#000" stroke-width="1.1" stroke-linejoin="round"/><path d="M270 382 L275.6 375" stroke="#000" stroke-width="3.2"/><path d="M270.6 381.2 L275.2 375.6" stroke="#fff" stroke-width="1.2"/><path d="M275.5 374.6 L279.8 369.8" stroke="#000" stroke-width="4.6" stroke-linecap="round"/><path d="M273.6 372.6 L277.6 376.6" stroke="#000" stroke-width="1.4"/></svg>
<div class="a" style="left:323px;top:357px;width:28px;height:28px;background:#fff;border:1px solid #777"></div>
<div class="a" style="left:307px;top:341px;width:28px;height:28px;background:#000;border:1px solid #777;box-shadow:inset 0 0 0 1px #fff"></div>
<svg style="left:0;top:0" width="1165" height="848" viewBox="0 0 1165 848"><path d="M341 345.5 Q345.6 345.8 346.6 350.5" stroke="#000" stroke-width="1.6" fill="none"/><path d="M338 345.3 L342.4 342.6 L342.4 348 Z M346.6 353.8 L344 349.6 L349.2 349.6 Z" fill="#000"/><rect x="305.5" y="371" width="15" height="15.5" rx="3" fill="#f7f7f7" stroke="#e6e6e6"/><rect x="308.5" y="374.5" width="9" height="9" fill="#fff" stroke="#777"/><rect x="313" y="375" width="4" height="4" fill="#aaa"/><rect x="309" y="379" width="4" height="4" fill="#aaa"/></svg>
<div class="a" style="left:175px;top:392px;width:161px;height:93px;background:#fff;border-top:1px solid #ddd"></div>
<div class="a" style="left:175px;top:392px;width:161px;height:93px;overflow:hidden"><svg style="left:-175px;top:-392px" width="1165" height="848" viewBox="0 0 1165 848"><defs><pattern id="hatch" width="1.6" height="1.6" patternUnits="userSpaceOnUse"><rect width="1.6" height="1.6" fill="#bbb"/><rect width=".8" height=".8" fill="#666"/></pattern></defs><g transform="translate(197.1 421.6) rotate(-44.0)"><path d="M0.5 0 L4.5 -1.9 L4.5 1.9 Z" fill="#fff" stroke="#000" stroke-width="0.8"/><path d="M0 0 L1.8 -0.9 L1.8 0.9 Z" fill="#000"/><rect x="4.5" y="-1.9" width="16.8" height="3.8" fill="url(#hatch)" stroke="#000" stroke-width="1"/></g><g transform="translate(237.8 418.6) rotate(-43.2)"><rect x="0" y="-1.4" width="17.8" height="2.8" rx="1" fill="#fff" stroke="#000" stroke-width="1"/><path d="M2 -1 V1 M5 -1 V1 M8 -1 V1 M11 -1 V1 M14 -1 V1" stroke="#000" stroke-width="0.6"/></g><path d="M241.5 414.5 L245.2 412.3 L252.6 418.3" fill="none" stroke="#000" stroke-width="1.3"/><path d="M236.8 413.8 Q237 411.2 239.6 412" fill="none" stroke="#000" stroke-width="1.3"/><g transform="translate(278.1 420.6) rotate(-44.4)"><rect x="0" y="-1.6" width="2.6" height="3.2" fill="#000"/><rect x="2.6" y="-1.7" width="4" height="3.4" fill="#fff" stroke="#000" stroke-width="0.9"/><path d="M6.6 -1.8 L19.3 -2.3 Q20.9 0 19.3 2.3 L6.6 1.8 Z" fill="#000"/></g><g transform="translate(317.2 419.6) rotate(-45.0)"><rect x="0" y="-1.6" width="2.6" height="3.2" fill="#000"/><rect x="2.6" y="-1.7" width="4" height="3.4" fill="#fff" stroke="#000" stroke-width="0.9"/><path d="M6.6 -1.8 L20.8 -2.3 Q22.4 0 20.8 2.3 L6.6 1.8 Z" fill="#000"/></g><path d="M329.8 411.6 Q326.6 415.6 326.8 417.4 Q327.4 420.4 329.8 420.4 Q332.2 420.4 332.8 417.4 Q333 415.6 329.8 411.6 Z" fill="#c8c8c8" stroke="#8a8a8a" stroke-width="0.8"/><g transform="translate(197.6 452.3) rotate(-40.3)"><path d="M0 0 L3.2 -1.8 L3.2 1.8 Z" fill="#000"/><rect x="3.2" y="-2.3" width="16.7" height="4.6" rx="0.8" fill="#fff" stroke="#000" stroke-width="1.1"/><rect x="13.9" y="-1.5" width="4" height="3" fill="#ccc"/></g><g transform="translate(239.8 451.2) rotate(-41.9)"><rect x="0" y="-3.6" width="15.9" height="7.2" rx="1" fill="#fff" stroke="#000" stroke-width="1.1"/><rect x="6.7" y="-3" width="8.6" height="6" fill="#8c8c8c"/><rect x="6.7" y="0.6" width="8.6" height="2.4" fill="#c4c4c4"/><path d="M6.7 -3.6 V3.6" stroke="#000" stroke-width="1"/></g><rect x="277.2" y="439.6" width="13" height="13" fill="none" stroke="#000" stroke-width="1" stroke-dasharray="1.6 1.6"/><text x="277.4" y="446.6" font-size="7.5" font-family="Liberation Sans" font-weight="bold">S</text><g transform="translate(280.6 453) rotate(-45.0)"><path d="M0 0 L3.2 -1.6 L3.2 1.6 Z" fill="#000"/><rect x="3.2" y="-2.1" width="13.8" height="4.2" rx="0.8" fill="#fff" stroke="#000" stroke-width="1"/></g><rect x="317.2" y="439.6" width="13" height="13" fill="none" stroke="#000" stroke-width="1" stroke-dasharray="1.6 1.6"/><text x="317.4" y="446.6" font-size="7.5" font-family="Liberation Sans" font-weight="bold">S</text><g transform="translate(322.4 451.6) rotate(-43.2)"><rect x="0" y="-3.6" width="13.7" height="7.2" rx="1" fill="#fff" stroke="#000" stroke-width="1.1"/><rect x="5.8" y="-3" width="7.4" height="6" fill="#8c8c8c"/><rect x="5.8" y="0.6" width="7.4" height="2.4" fill="#c4c4c4"/><path d="M5.8 -3.6 V3.6" stroke="#000" stroke-width="1"/></g><g transform="translate(205 478) rotate(-42)"><rect x="-6" y="-5" width="12" height="10" fill="#8a8a8a" stroke="#000" stroke-width="1.1"/><rect x="-6" y="-5" width="3" height="10" fill="#fff" stroke="#000" stroke-width="1"/><path d="M3 -5 Q8 -9 7 -1" fill="none" stroke="#000" stroke-width="1"/></g><g transform="translate(239.4 483.5) rotate(-42.0)"><path d="M0 0 L3.2 -1.6 L3.2 1.6 Z" fill="#000"/><rect x="3.2" y="-2.1" width="13.2" height="4.2" rx="0.8" fill="#fff" stroke="#000" stroke-width="1"/></g><g transform="translate(278.7 483.5) rotate(-46.2)"><rect x="0" y="-1.6" width="2.6" height="3.2" fill="#000"/><rect x="2.6" y="-1.7" width="4" height="3.4" fill="#fff" stroke="#000" stroke-width="0.9"/><path d="M6.6 -1.8 L19.9 -2.3 Q21.5 0 19.9 2.3 L6.6 1.8 Z" fill="#000"/></g><g transform="translate(319.2 483.5) rotate(-43.1)"><path d="M0.5 0 L4.5 -1.9 L4.5 1.9 Z" fill="#fff" stroke="#000" stroke-width="0.8"/><path d="M0 0 L1.8 -0.9 L1.8 0.9 Z" fill="#000"/><rect x="4.5" y="-1.9" width="14.4" height="3.8" fill="url(#hatch)" stroke="#000" stroke-width="1"/></g></svg></div>
<div class="t" style="left:177px;top:393px;">铅笔</div>
<div class="t" style="left:217px;top:393px;">喷枪</div>
<div class="t" style="left:257px;top:393px;">笔</div>
<div class="t" style="left:297px;top:393px;letter-spacing:-0.5px">水彩笔</div>
<div class="t" style="left:177px;top:425px;letter-spacing:-0.5px">马克笔</div>
<div class="t" style="left:217px;top:425px;letter-spacing:-0.5px">橡皮擦</div>
<div class="t" style="left:257px;top:425px;letter-spacing:-0.5px">选择笔</div>
<div class="t" style="left:297px;top:425px;letter-spacing:-0.5px">选区擦</div>
<div class="t" style="left:177px;top:457px;letter-spacing:-0.5px">油漆桶</div>
<div class="t" style="left:217px;top:457px;letter-spacing:-0.5px">2值笔</div>
<div class="t" style="left:257px;top:457px;letter-spacing:-0.5px">和纸笔</div>
<div class="t" style="left:297px;top:457px;letter-spacing:-0.5px">铅笔30</div>
<div class="a" style="left:215px;top:392px;width:1px;height:93px;background:#dedede"></div>
<div class="a" style="left:255px;top:392px;width:1px;height:93px;background:#dedede"></div>
<div class="a" style="left:295px;top:392px;width:1px;height:93px;background:#dedede"></div>
<div class="a" style="left:175px;top:424px;width:161px;height:1px;background:#dedede"></div>
<div class="a" style="left:175px;top:456px;width:161px;height:1px;background:#dedede"></div>
<div class="a" style="left:336px;top:392px;width:15px;height:93px;background:#f0f0f0"></div>
<div class="a" style="left:336px;top:394px;width:15px;height:14px;border:2px solid #555;border-radius:2px;background:#aaa"><div class="a" style="left:2.0px;top:3.0px;border-left:3.5px solid transparent;border-right:3.5px solid transparent;border-bottom:4px solid #fff"></div></div>
<div class="a" style="left:336px;top:409px;width:15px;height:10px;border:2px solid #555;border-radius:2px;background:#aaa"></div>
<div class="a" style="left:336px;top:472px;width:15px;height:14px;border:2px solid #555;border-radius:2px;background:#aaa"><div class="a" style="left:2.0px;top:3.0px;border-left:3.5px solid transparent;border-right:3.5px solid transparent;border-top:4px solid #fff"></div></div>
<div class="a" style="left:231px;top:380px;width:56px;height:18px;border:1px solid #222;background:#ffffe1"></div>
<div class="t" style="left:235px;top:382px;">魔棒工具</div>
<div class="a" style="left:170px;top:485px;width:188px;height:9px;background:#f9f9f9"></div>
<div class="a" style="left:174px;top:494px;width:180px;height:1px;background:#d4d4d4"></div>
<div class="a" style="left:256px;top:493px;width:14px;height:3px;background:#d0d0d0;border-radius:2px"></div>
<div class="a" style="left:169px;top:592px;width:2px;height:16px;background:#d8d8d8;border-radius:1px"></div>
<div class="t" style="left:174px;top:500px;">选区抽取模式:</div>
<div class="rb" style="left:174px;top:516px"><div class="a" style="left:3px;top:3px;width:5px;height:5px;border-radius:50%;background:#000"></div></div>
<div class="t" style="left:190px;top:515px;">透明部分 (精确)</div>
<div class="rb" style="left:174px;top:535px"></div>
<div class="t" style="left:190px;top:534px;">透明部分 (模糊)</div>
<div class="rb" style="left:174px;top:554px"></div>
<div class="t" style="left:190px;top:553px;">色差范围内的部分</div>
<div class="combo" style="left:190px;top:571px;width:132px;height:17px;border-color:#a0a0a0"></div>
<div class="t" style="left:193px;top:573px;">判定透明的范围</div>
<div class="t" style="left:301px;top:573px;">±0</div>
<div class="t" style="left:174px;top:596px;">选区抽取来源:</div>
<div class="rb" style="left:174px;top:612px"><div class="a" style="left:3px;top:3px;width:5px;height:5px;border-radius:50%;background:#000"></div></div>
<div class="t" style="left:190px;top:611px;">编辑中的图层</div>
<div class="rb" style="left:174px;top:631px"></div>
<div class="t" style="left:190px;top:630px;">指定为选取来源的图层</div>
<div class="rb" style="left:174px;top:650px"></div>
<div class="t" style="left:190px;top:649px;">可见图像</div>
<div class="cb" style="left:174px;top:672px"><svg style="left:1px;top:1px" width="10" height="10"><path d="M1.5 5 L4 8 L9 1.5" stroke="#000" stroke-width="2" fill="none"/></svg></div>
<div class="t" style="left:190px;top:672px;">抗锯齿</div>
<div class="redbox" style="left:155px;top:56px;width:195px;height:186px"></div>
<div class="redbox" style="left:169px;top:336px;width:191px;height:153px"></div>
<div class="redbox" style="left:213px;top:336px;width:36px;height:33px;border-top:none;box-shadow:3px 3px 3px rgba(40,60,60,.75), inset 3px 0px 4px rgba(40,60,60,.6)"></div>
<div class="dbtn" style="left:357px;top:51px;width:21px;height:19px"></div>
<div class="a" style="left:380px;top:51px;width:21px;height:19px;border:2px solid #cfcfcf;border-radius:3px;background:#e0e0e0"></div>
<div class="dbtn" style="left:409px;top:51px;width:21px;height:19px"></div>
<div class="dbtn" style="left:432px;top:51px;width:21px;height:19px"></div>
<svg style="left:0;top:0" width="1165" height="848" viewBox="0 0 1165 848"><path d="M365.6 57.4 A3.8 3.8 0 1 1 366.4 63.4" fill="none" stroke="#fff" stroke-width="2.4"/><path d="M361.8 55.6 L361.8 62.4 L368.2 62 Z" fill="#fff"/><path d="M362.2 65.6 H373.2" stroke="#fff" stroke-width="1"/><path d="M393.4 57.4 A3.8 3.8 0 1 0 392.6 63.4" fill="none" stroke="#fff" stroke-width="2.4"/><path d="M397.2 55.6 L397.2 62.4 L390.8 62 Z" fill="#fff"/><path d="M385.8 65.6 H396.8" stroke="#fff" stroke-width="1"/><path d="M413 66 V55.5 H426.5 V66 H413" fill="none" stroke="#fff" stroke-width="1" stroke-dasharray="1.6 1.4"/><path d="M418 64 L423.6 57.6 L427.6 61.2 L422 67.4 Z" fill="#fff" stroke="#aaa" stroke-width="0.5"/><ellipse cx="443" cy="61" rx="6.2" ry="5.4" fill="none" stroke="#fff" stroke-width="1" stroke-dasharray="1.6 1.4"/><path d="M436.5 60 H449.5" stroke="#fff" stroke-width="1.2"/><path d="M435 60 L438 58 V62 Z M451 60 L448 58 V62 Z" fill="#fff"/><path d="M437 66.5 H449" stroke="#fff" stroke-width="1" stroke-dasharray="1.6 1.4"/></svg>
<div class="cb" style="left:458px;top:55px"><svg style="left:1px;top:1px" width="10" height="10"><path d="M1.5 5 L4 8 L9 1.5" stroke="#000" stroke-width="2" fill="none"/></svg></div>
<div class="t" style="left:474px;top:55px;">选区边缘</div>
<div class="combo" style="left:532px;top:51px;width:70px;height:19px;"></div>
<div class="t" style="left:540px;top:55px;font-size:11px">100%</div>
<div class="dd" style="left:585px;top:53px"></div>
<div class="dbtn" style="left:605px;top:51px;width:19px;height:19px"><div class="a" style="left:2px;top:6px;width:11px;height:3px;background:#fff"></div></div>
<div class="dbtn" style="left:626px;top:51px;width:19px;height:19px"><div class="a" style="left:2px;top:6px;width:11px;height:3px;background:#fff"></div><div class="a" style="left:6px;top:2px;width:3px;height:11px;background:#fff"></div></div>
<div class="dbtn" style="left:647px;top:51px;width:19px;height:19px"><div class="a" style="left:3px;top:3px;width:9px;height:9px;background:#fff"></div></div>
<div class="combo" style="left:674px;top:51px;width:64px;height:19px;"></div>
<div class="t" style="left:681px;top:55px;font-size:11px">+000°</div>
<div class="dd" style="left:721px;top:53px"></div>
<div class="dbtn" style="left:741px;top:51px;width:19px;height:19px"><svg style="left:0px;top:0px" width="15" height="15"><path d="M5 3.6 A4.6 4.6 0 1 1 3.2 9.2" stroke="#fff" stroke-width="2" fill="none"/><path d="M0.8 7.6 L6 7.6 L2.6 11.6 Z" fill="#fff"/></svg></div>
<div class="dbtn" style="left:762px;top:51px;width:19px;height:19px"><svg style="left:0px;top:0px" width="15" height="15"><path d="M10 3.6 A4.6 4.6 0 1 0 11.8 9.2" stroke="#fff" stroke-width="2" fill="none"/><path d="M14.2 7.6 L9 7.6 L12.4 11.6 Z" fill="#fff"/></svg></div>
<div class="dbtn" style="left:783px;top:51px;width:19px;height:19px"><div class="a" style="left:3px;top:3px;width:9px;height:9px;background:#fff"></div></div>
<div class="combo" style="left:810px;top:51px;width:39px;height:19px;border-color:#bdbdbd"></div>
<div class="t" style="left:817px;top:55px;">正常</div>
<div class="dbtn" style="left:852px;top:51px;width:21px;height:19px"><svg style="left:1px;top:1px" width="17" height="15"><path d="M3 4.5 H14 M3 10.5 H14" stroke="#fff" stroke-width="2"/><path d="M1 4.5 L5 1 V8 Z M16 10.5 L12 7 V14 Z" fill="#fff"/></svg></div>
<div class="t" style="left:881px;top:55px;">抖动修正</div>
<div class="combo" style="left:932px;top:51px;width:48px;height:19px;"></div>
<div class="t" style="left:938px;top:55px;font-size:11px">3</div>
<div class="dd" style="left:963px;top:53px"></div>
<svg style="left:0;top:0" width="1165" height="848" viewBox="0 0 1165 848"><path d="M765.8 583 C776.5 582.3 808.3 580.2 830 579 C851.7 577.8 885.0 576.1 896 575.5 C900.0 575.3 912.3 574.4 920 574.4 C927.7 574.4 938.3 575.2 942 575.4 C941.3 579.5 939.2 592.2 938 600 C936.8 607.8 936.1 614.3 934.7 622 C933.3 629.7 930.5 639.7 929.5 646 C928.5 652.3 928.7 657.7 928.5 660 C928.1 666.7 926.5 688.3 926 700 C925.5 711.7 925.4 721.3 925.2 730 C925.0 738.7 925.0 748.3 925 752 C919.5 752.3 904.8 754.0 892 753.9 C879.2 753.8 866.2 752.2 848.5 751.2 C830.8 750.2 798.0 748.8 786 747.6 C774.0 746.4 778.2 744.6 776.6 744 C776.2 737.6 775.1 721.3 774 705.6 C772.9 689.9 770.9 663.6 770 650 C769.1 636.4 769.2 635.2 768.5 624 C767.8 612.8 766.2 589.8 765.8 583 Z" fill="#8080ff" stroke="#24249a" stroke-width="1.1"/><path d="M762 509 C762.7 508.6 764.7 507.2 766 506.8 C767.3 506.4 766.0 506.2 770 506.5 C774.0 506.8 770.2 507.9 790 508.5 C809.8 509.1 872.5 510.0 889 510.3 C889.7 515.2 891.8 529.2 893 540 C894.2 550.8 895.8 569.2 896.4 575 C885.3 575.7 851.7 577.6 830 579 C808.3 580.4 777.0 582.6 766.4 583.3 C766.1 577.8 765.2 562.4 764.5 550 C763.8 537.6 762.4 515.8 762 509 Z" fill="#000"/><path d="M886 482 C890.8 482.3 905.2 483.2 915 484 C924.8 484.8 931.8 485.4 944.6 487 C957.4 488.6 975.8 491.7 991.7 493.3 C1007.6 494.9 1022.2 495.5 1040 496.5 C1057.8 497.5 1087.6 498.6 1098.2 499.5 C1108.8 500.4 1102.6 501.6 1103.5 502 C1103.4 502.8 1103.9 502.0 1103 507 C1102.1 512.0 1099.8 523.2 1098 532 C1096.2 540.8 1093.7 551.3 1092 560 C1090.3 568.7 1089.7 573.2 1088 584 C1086.3 594.8 1083.6 612.2 1082 625 C1080.4 637.8 1079.0 654.6 1078.4 660.5 C1053.4 660.5 953.5 660.3 928.5 660.3 C928.6 657.9 928.0 652.9 929 646 C930.0 639.1 932.6 630.3 934.7 618.7 C936.8 607.1 940.4 583.5 941.5 576.5 C941.4 565.4 941.1 521.1 941 510 C932.3 510.0 897.7 510.0 889 510 C888.6 507.8 887.0 501.7 886.5 497 C886.0 492.3 886.1 484.5 886 482 Z" fill="#000"/><path d="M756 480.4 C756.4 482.0 757.6 485.4 758.5 490 C759.4 494.6 760.5 499.5 761.2 507.8 C762.0 516.1 762.3 527.5 763 540 C763.7 552.5 764.6 569.0 765.5 583 C766.4 597.0 767.1 603.6 768.5 624 C769.9 644.4 772.6 685.6 774 705.6 C775.4 725.6 776.2 737.6 776.6 744 " fill="none" stroke="#000" stroke-width="1.3" stroke-linecap="round"/><path d="M761 482.7 C781.9 482.7 865.5 482.7 886.4 482.7 " fill="none" stroke="#000" stroke-width="1.5" stroke-linecap="round"/><path d="M817.3 649.5 C819.4 649.8 825.2 650.1 830 651 C834.8 651.9 835.5 653.7 845.8 654.9 C856.1 656.1 878.1 657.1 891.9 658.1 C905.7 659.1 922.4 660.2 928.5 660.6 " fill="none" stroke="#0c0c50" stroke-width="1.3" stroke-linecap="round"/><path d="M765 742.2 C765.8 742.2 768.2 742.0 770 742.5 C771.8 743.0 773.3 744.6 776 745.5 C778.7 746.4 773.9 746.6 786 747.6 C798.1 748.6 830.9 750.2 848.5 751.2 C866.1 752.2 879.1 753.5 891.9 753.9 C904.6 754.3 909.5 753.3 925 753.6 C940.5 753.9 967.9 754.6 985 755.7 C1002.1 756.8 1014.7 758.8 1027.4 760 C1040.1 761.2 1052.6 761.8 1061.4 763.2 C1070.2 764.6 1075.2 767.5 1080.5 768.5 C1085.8 769.5 1091.0 769.4 1093.2 769.1 C1095.5 768.9 1093.9 767.4 1094 767 " fill="none" stroke="#000" stroke-width="1.3" stroke-linecap="round"/><path d="M1078.4 660.5 C1077.7 664.9 1075.0 676.0 1074 686.7 C1073.0 697.5 1072.7 706.6 1072.4 725 C1072.2 743.4 1072.5 785.0 1072.5 797 " fill="none" stroke="#000" stroke-width="1.3" stroke-linecap="round"/><path d="M928.5 660 C928.0 669.0 926.1 700.0 925.5 714.3 C924.9 728.6 924.8 739.7 925 746 C925.2 752.3 926.7 751.0 927 752 " fill="none" stroke="#000" stroke-width="1.2" stroke-linecap="round"/></svg>
</body></html>
